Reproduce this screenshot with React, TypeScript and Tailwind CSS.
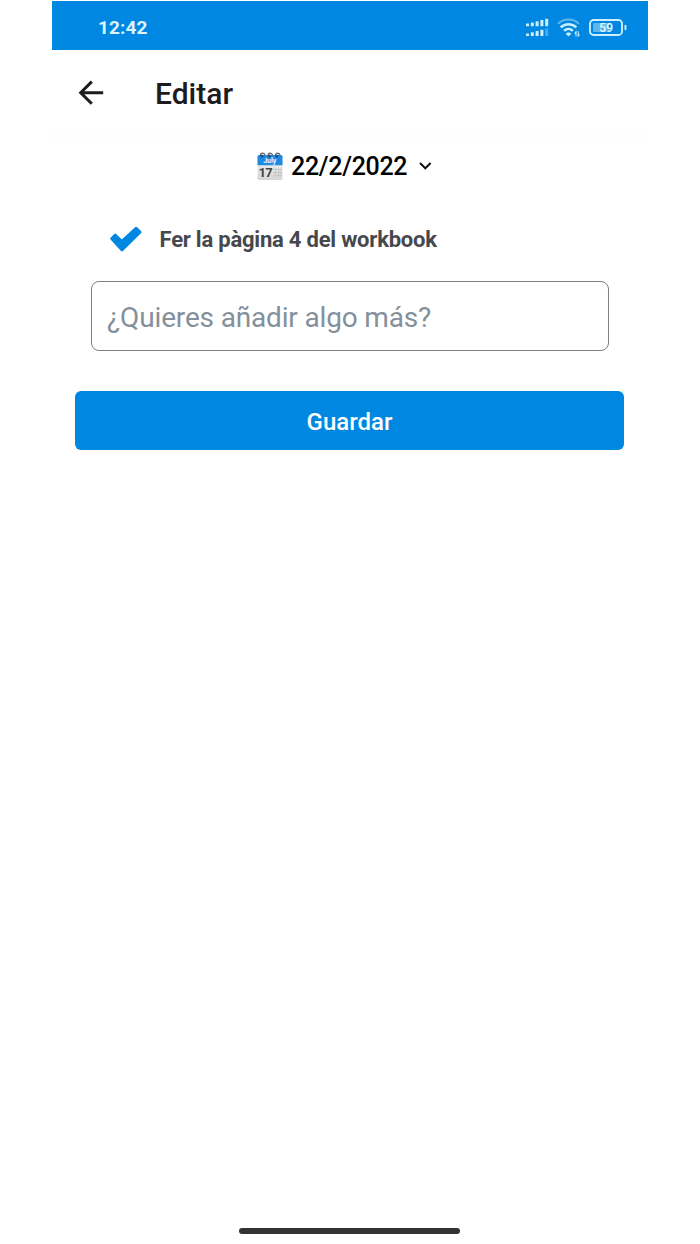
import React from 'react';

function SignalIcon() {
  const bars = [0, 1, 2, 3, 4];
  return (
    <svg width="24" height="20" viewBox="0 0 24 20" fill="#cdeefb" aria-hidden="true">
      {bars.map((i) => (
        <React.Fragment key={i}>
          <rect x={1 + i * 4.8} y={5.6 - i * 1.2} width="3" height={2.6 + i * 1.2} rx="0.5" />
          <rect
            x={1 + i * 4.8}
            y={15.4 - i * 1.2}
            width="3"
            height={2.6 + i * 1.2}
            rx="0.5"
            opacity={i === 4 ? 0.35 : 1}
          />
        </React.Fragment>
      ))}
    </svg>
  );
}

function WifiIcon() {
  return (
    <svg width="24" height="20" viewBox="0 0 24 20" fill="none" aria-hidden="true">
      <path d="M1 5.8C6.7 .1 16.3 .1 22 5.8" stroke="#5fb9ef" strokeWidth="1.9" />
      <path d="M3.7 9.3c4.3-4.2 11.3-4.2 15.6 0" stroke="#cdeefb" strokeWidth="2.5" />
      <path d="M7.1 12.9c2.5-2.4 6.3-2.4 8.8 0" stroke="#cdeefb" strokeWidth="2.5" />
      <path d="M11.5 18.2 9 15.7c1.4-1.3 3.6-1.3 5 0Z" fill="#cdeefb" stroke="#cdeefb" strokeWidth="0.6" />
      <path d="M19 18.3v-4.6l-1.3 1.6M21.2 13.3V18l1.3-1.6" stroke="#cdeefb" strokeWidth="1.1" />
    </svg>
  );
}

function BatteryIcon() {
  return (
    <svg width="38" height="18" viewBox="0 0 38 18" fill="none" aria-hidden="true">
      <rect x="1" y="1" width="32" height="15" rx="3.6" stroke="#cdeefb" strokeWidth="1.9" />
      <rect x="4" y="4" width="16" height="9" rx="1" fill="#5db6ef" />
      <rect x="35.5" y="5.8" width="1.9" height="5.4" rx="0.9" fill="#cdeefb" />
      <text
        x="17"
        y="13"
        textAnchor="middle"
        fontSize="12.5"
        fontWeight="500"
        fontFamily="Roboto, sans-serif"
        fill="#e8f9ff"
      >
        59
      </text>
    </svg>
  );
}

function CalendarIcon() {
  return (
    <svg width="26" height="30" viewBox="0 0 26 30" aria-hidden="true">
      <defs>
        <linearGradient id="sheet" x1="0" y1="0" x2="0" y2="1">
          <stop offset="0" stopColor="#f7f7f7" />
          <stop offset="1" stopColor="#d6d6d6" />
        </linearGradient>
      </defs>
      <rect x="0.5" y="3" width="25" height="25" rx="1.5" fill="url(#sheet)" />
      <path d="M.5 13.3V4.5A1.5 1.5 0 0 1 2 3h22a1.5 1.5 0 0 1 1.5 1.5v8.8Z" fill="#1b8ae0" />
      {[5, 12.5, 20].map((x) => (
        <g key={x}>
          <circle cx={x} cy="4" r="1.6" fill="#284d70" />
          <path
            d={`M${x - 1.5} 3.2c0-2.6 4.1-2.8 4.5 0`}
            fill="none"
            stroke="#56606a"
            strokeWidth="1.2"
          />
        </g>
      ))}
      <text
        x="12.8"
        y="11.4"
        textAnchor="middle"
        fontSize="7"
        fontWeight="700"
        fontFamily="Roboto, sans-serif"
        fill="#e9f6ff"
      >
        July
      </text>
      <text
        x="1.6"
        y="25"
        fontSize="13"
        fontWeight="700"
        fontFamily="Roboto, sans-serif"
        textLength="14"
        fill="#444"
      >
        17
      </text>
      <path d="M16 17.5h9M16 20.5h9M16 23.5h9M18.5 16v9M21.5 16v9M24 16v9" stroke="#c2c2c2" strokeWidth="0.7" />
    </svg>
  );
}

function StatusBar() {
  return (
    <div className="mt-px flex h-[49px] items-center bg-[#0087e1] pl-[46px] pr-[21px]">
      <span className="pt-1 text-[19px] font-bold leading-6 tracking-[0.1px] text-[#dcf5ff]">12:42</span>
      <div className="ml-auto flex items-center pt-1">
        <SignalIcon />
        <div className="ml-2 flex">
          <WifiIcon />
        </div>
        <div className="ml-2 flex">
          <BatteryIcon />
        </div>
      </div>
    </div>
  );
}

export default function App() {
  return (
    <div className="flex h-[1244px] w-[700px] justify-center bg-white font-[Roboto,sans-serif]">
      <div className="flex w-[596px] flex-col">
        <StatusBar />

        <header className="flex h-[87px] items-center border-b-2 border-[#fcfcfc] pl-[26px]">
          <button type="button" aria-label="Atrás" className="flex">
            <svg width="27" height="26" viewBox="0 0 27 26" fill="none" stroke="#1c1c1e" strokeWidth="3">
              <path d="M25.2 12.7H3M13.8 1.6 2.7 12.7 13.8 23.8" />
            </svg>
          </button>
          <h1 className="ml-[50px] pt-[3px] text-[30px] font-medium leading-9 text-[#1c1c1e]">Editar</h1>
        </header>

        <button type="button" className="mt-[13px] flex h-[34px] items-center self-start pl-[205px]">
          <CalendarIcon />
          <span className="ml-2 text-[25px] font-medium leading-8 tracking-[-0.3px] text-black">22/2/2022</span>
          <svg className="ml-[12px] mb-[2px]" width="13" height="10" viewBox="0 0 13 10" fill="none" stroke="#111" strokeWidth="2">
            <path d="m1 2 5.3 5.3L11.6 2" />
          </svg>
        </button>

        <div className="mt-10 flex h-8 items-center pl-[58px]">
          <svg width="32" height="26" viewBox="0 0 32 26" aria-hidden="true">
            <path
              d="M2 11.6 5.2 8.4 11.8 14.8 26.2 1.6 29.8 5.1 12 22.6Z"
              fill="#0087e1"
              stroke="#0087e1"
              strokeWidth="3.4"
              strokeLinejoin="round"
            />
          </svg>
          <span className="ml-[17.5px] text-[22px] font-bold leading-7 tracking-[-0.22px] text-[#46484c]">
            Fer la pàgina 4 del workbook
          </span>
        </div>

        <input
          type="text"
          placeholder="¿Quieres añadir algo más?"
          className="mx-[39px] mt-[25px] h-[70px] rounded-lg border border-[#808080] px-[15px] pt-0.5 text-[28px] tracking-[-0.16px] text-[#46484c] outline-none placeholder:text-[#84909b]"
        />

        <button
          type="button"
          className="ml-[23px] mr-6 mt-10 h-[59px] rounded-md bg-[#0087e1] pt-[3px] text-[24px] font-medium text-white"
        >
          Guardar
        </button>

        <div className="mb-[10px] mt-auto mr-px h-[6px] w-[221px] self-center rounded-full bg-[#333]" />
      </div>
    </div>
  );
}
